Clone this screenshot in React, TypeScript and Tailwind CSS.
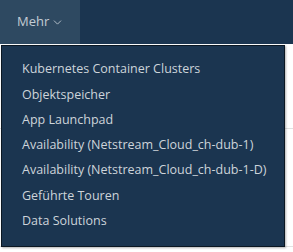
import { ChevronDown } from 'lucide-react'

const items = [
  'Kubernetes Container Clusters',
  'Objektspeicher',
  'App Launchpad',
  'Availability (Netstream_Cloud_ch-dub-1)',
  'Availability (Netstream_Cloud_ch-dub-1-D)',
  'Geführte Touren',
  'Data Solutions',
]

export default function App() {
  return (
    <div className="relative w-[293px] h-[252px] bg-white overflow-hidden font-['Open_Sans',sans-serif]">
      <header className="flex h-[44px] bg-[#1b3550]">
        <div className="flex items-center gap-[2px] pl-[17px] w-[80px] bg-[#2e4961] text-[13px] text-[#c3ccd4]">
          Mehr
          <ChevronDown size={13} strokeWidth={1.6} />
        </div>
      </header>
      <div className="h-[85px] border-b border-[#e2e2e2]" />
      <div className="h-[118px] border-b border-[#e2e2e2]" />
      <div className="absolute left-[1px] top-[45px] w-[284px] h-[202px] bg-[#1b3550] border border-[#0b1722] shadow-[1px_1px_2px_rgba(0,0,0,0.3)] pt-[11px]">
        {items.map((t) => (
          <div key={t} className="h-[25.3px] flex items-center pl-[20px] text-[12.5px] text-[#cdd4da] whitespace-nowrap">
            {t}
          </div>
        ))}
      </div>
    </div>
  )
}
